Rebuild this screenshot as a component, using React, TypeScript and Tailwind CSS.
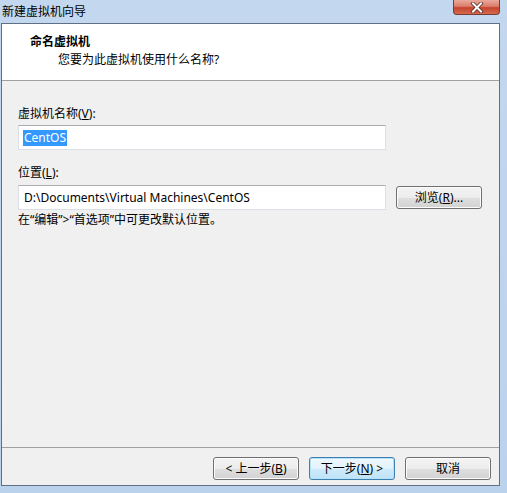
const font = {fontFamily: '"Noto Sans", "Noto Sans CJK SC", sans-serif'};

function WinButton({children, primary = false}: {children: React.ReactNode; primary?: boolean}) {
  return (
    <button
      className={
        primary
          ? "flex h-[23px] w-[86px] items-center justify-center rounded-[3px] border border-[#3c7fb1] bg-[linear-gradient(#eef7fd_0%,#e3f3fc_50%,#cdebfb_51%,#bfe3f8_100%)] text-[12px] text-black shadow-[inset_0_0_0_1px_#b7e1f9]"
          : "flex h-[23px] w-[86px] items-center justify-center rounded-[3px] border border-[#707070] bg-[linear-gradient(#f4f4f4_0%,#ececec_50%,#dfdfdf_51%,#d2d2d2_100%)] text-[12px] text-black shadow-[inset_0_0_0_1px_#fcfcfc]"
      }
      type="button"
    >
      {children}
    </button>
  );
}

function TextBox({children}: {children: React.ReactNode}) {
  return (
    <div className="flex h-[25px] w-[368px] items-center border border-[#dbdfe6] border-t-[#abadb3] bg-white pl-[4px] text-[12px] text-black">
      {children}
    </div>
  );
}

export default function App() {
  return (
    <div
      className="flex h-[493px] w-[507px] flex-col overflow-hidden bg-[linear-gradient(#c3d8ef,#bad2ec)] leading-[16px]"
      style={font}
    >
      <div className="flex h-[23px] shrink-0 items-start justify-between">
        <span className="pl-[2px] pt-[4px] text-[12px] text-black">新建虚拟机向导</span>
        <div className="mr-[7px] flex h-[15px] w-[47px] items-center justify-center rounded-b-[4px] border border-t-0 border-[#7a3a33] bg-[linear-gradient(#e9a99b_0%,#dc7e6b_45%,#c4442e_55%,#d5694f_100%)]">
          <svg width="14" height="11" viewBox="0 0 14 11">
            <path d="M3 1.5 L11 9.5 M11 1.5 L3 9.5" stroke="#5a2a25" strokeWidth="3.6" strokeLinecap="square" />
            <path d="M3 1.5 L11 9.5 M11 1.5 L3 9.5" stroke="#ffffff" strokeWidth="2" strokeLinecap="square" />
          </svg>
        </div>
      </div>

      <div className="ml-[1px] flex h-[463px] w-[499px] shrink-0 flex-col border border-[#5f6f84] bg-[#f0f0f0]">
        <div className="flex h-[57px] shrink-0 flex-col border-b border-[#a0a0a0] bg-white pt-[10px]">
          <span className="pl-[28px] text-[12px] font-bold text-black">命名虚拟机</span>
          <span className="pl-[56px] pt-[2px] text-[12px] text-black">您要为此虚拟机使用什么名称?</span>
        </div>

        <div className="flex flex-1 flex-col pl-[16px] pt-[25px] text-[12px] text-black">
          <span>
            虚拟机名称(<span className="underline">V</span>):
          </span>
          <div className="pt-[3px]">
            <TextBox>
              <span className="bg-[#3399ff] px-[1px] text-white">CentOS</span>
            </TextBox>
          </div>

          <span className="pt-[15px]">
            位置(<span className="underline">L</span>):
          </span>
          <div className="flex items-center gap-[10px] pt-[4px]">
            <TextBox>
              <span className="pl-[1px]">D:\Documents\Virtual Machines\CentOS</span>
            </TextBox>
            <WinButton>
              浏览(<span className="underline">R</span>)...
            </WinButton>
          </div>
          <span className="pt-[2px]">在“编辑”&gt;“首选项”中可更改默认位置。</span>
        </div>

        <div className="flex h-[38px] shrink-0 items-start justify-end gap-[10px] border-t border-[#a0a0a0] pr-[8px] pt-[9px]">
          <WinButton>
            &lt; 上一步(<span className="underline">B</span>)
          </WinButton>
          <WinButton primary>
            下一步(<span className="underline">N</span>) &gt;
          </WinButton>
          <WinButton>取消</WinButton>
        </div>
      </div>
    </div>
  );
}
